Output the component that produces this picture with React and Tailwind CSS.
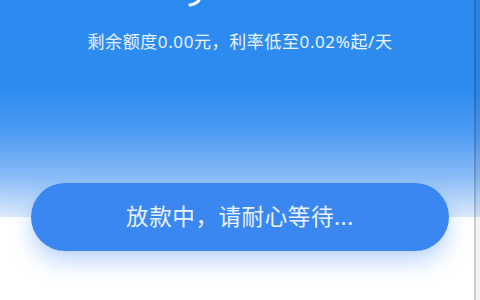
export default function App() {
  const font = { fontFamily: '"Noto Sans", "Noto Sans CJK SC", sans-serif' };

  return (
    <div className="relative w-[480px] h-[300px] overflow-hidden bg-white" style={font}>
      {/* blue header */}
      <div className="relative h-[217px] bg-[linear-gradient(to_bottom,#2b8af0_0%,#2e8cf0_42%,#4f9cf3_62%,#8dbdf7_82%,#dcebfd_100%)]">
        {/* tail of the big amount glyph cut by the top edge */}
        <svg className="absolute left-[186px] top-0" width="16" height="8" viewBox="0 0 16 8">
          <path d="M13 0 C12 2 9 4 4 5" stroke="white" strokeWidth="3" fill="none" strokeLinecap="round" />
        </svg>
        <p className="pt-[32px] text-center text-[17px] leading-[20px] tracking-[0.6px] text-white/90">
          剩余额度0.00元，利率低至0.02%起/天
        </p>
      </div>

      {/* status button */}
      <div className="relative z-10 flex justify-center -mt-[34px]">
        <div className="w-[418px] h-[68px] rounded-full bg-[#3a87f2] shadow-[0_10px_22px_rgba(58,135,242,0.35)] flex items-center justify-center">
          <span className="text-[22.5px] leading-none text-white/90 tracking-[0.6px]">放款中，请耐心等待...</span>
        </div>
      </div>

      {/* scroll edge */}
      <div className="absolute right-0 top-0 z-20 h-full w-[6px] flex">
        <div className="w-[2px] h-full bg-black/20" />
        <div className="flex-1 h-full bg-black/5" />
      </div>
    </div>
  );
}
